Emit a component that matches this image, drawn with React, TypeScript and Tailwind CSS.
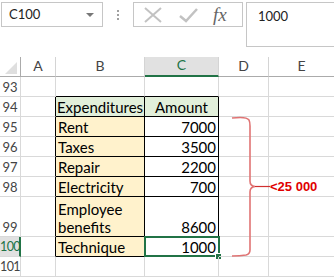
import type { ReactNode } from 'react'

type CellProps = {
  children?: ReactNode
  className?: string
}

// one grid cell, Excel text is bottom aligned
function Cell({ children, className = '' }: CellProps) {
  return <div className={`relative flex items-end border-b border-r ${className}`}>{children}</div>
}

const rows: { n: string; b?: string; c?: string; tall?: boolean; sel?: boolean }[] = [
  { n: '95', b: 'Rent', c: '7000' },
  { n: '96', b: 'Taxes', c: '3500' },
  { n: '97', b: 'Repair', c: '2200' },
  { n: '98', b: 'Electricity', c: '700' },
  { n: '99', b: 'Employee benefits', c: '8600', tall: true },
  { n: '100', b: 'Technique', c: '1000', sel: true },
]

export default function App() {
  const grid = 'border-[#d9d9d9]'
  const head = 'border-[#d4d4d4] justify-center text-[14px] text-[#444] pb-[1px]'
  const rowHead = 'justify-center text-[13px] text-[#444] border-[#d9d9d9]'

  return (
    <div className="relative h-[278px] w-[334px] overflow-hidden bg-white font-['Lato',sans-serif] text-black">
      {/* formula bar */}
      <div className="flex h-[57px] items-start pl-[1px] pt-[2px]">
        <div className="flex h-[25px] w-[102px] items-center justify-between border border-[#c6c6c6] pl-[7px] pr-[8px] text-[13px] text-[#222]">
          <span>C100</span>
          <span className="h-0 w-0 border-x-[4px] border-t-[4px] border-x-transparent border-t-[#777]" />
        </div>
        <div className="ml-[14px] mt-[8px] flex flex-col gap-[2px]">
          <span className="h-[2px] w-[2px] bg-[#a0a0a0]" />
          <span className="h-[2px] w-[2px] bg-[#a0a0a0]" />
          <span className="h-[2px] w-[2px] bg-[#a0a0a0]" />
        </div>
        <div className="ml-[14px] flex h-[25px] w-[110px] items-center border border-[#c6c6c6]">
          <svg className="ml-[9px]" width="20" height="16" viewBox="0 0 20 16">
            <path d="M2 1 L18 15 M18 1 L2 15" stroke="#c2c2c2" strokeWidth="2" fill="none" />
          </svg>
          <svg className="ml-[16px]" width="19" height="16" viewBox="0 0 19 16">
            <path d="M1 9 L7 14 L18 2" stroke="#c2c2c2" strokeWidth="2.5" fill="none" />
          </svg>
          <span className="ml-[15px] font-['Liberation_Serif',serif] text-[19px] italic leading-none text-[#666]">
            fx
          </span>
        </div>
        <div className="ml-[3px] flex h-[45px] flex-1 items-start border border-r-0 border-[#c6c6c6] pl-[11px] pt-[4px] text-[13px] text-[#222]">
          1000
        </div>
      </div>

      {/* sheet */}
      <div className="grid grid-cols-[21px_35px_89px_74px_50px_1fr] grid-rows-[20px_20px_20px_20px_20px_20px_20px_40px_20px_20px_20px] text-[15px] leading-[18px]">
        {/* column headers */}
        <Cell className="border-[#ababab]">
          <span className="absolute bottom-[2px] right-[3px] h-0 w-0 border-b-[12px] border-l-[12px] border-b-[#dfdfdf] border-l-transparent" />
        </Cell>
        <Cell className={`${head} border-b-[#ababab]`}>A</Cell>
        <Cell className={`${head} border-b-[#ababab]`}>B</Cell>
        <Cell className={`${head} bg-[#e1e1e1] border-b-2 border-b-[#217346] text-[#217346]`}>C</Cell>
        <Cell className={`${head} border-b-[#ababab]`}>D</Cell>
        <Cell className={`${head} border-b-[#ababab] border-r-0`}>E</Cell>

        {/* 93 */}
        <Cell className={rowHead}>93</Cell>
        <Cell className={grid} />
        <Cell className={`${grid} border-b-black`} />
        <Cell className={`${grid} border-b-black`} />
        <Cell className={grid} />
        <Cell className={`${grid} border-r-0`} />

        {/* 94 */}
        <Cell className={rowHead}>94</Cell>
        <Cell className={`${grid} border-r-black`} />
        <Cell className="justify-center border-black bg-[#e2efda]">Expenditures</Cell>
        <Cell className="justify-center border-black bg-[#e2efda]">Amount</Cell>
        <Cell className={grid} />
        <Cell className={`${grid} border-r-0`} />

        {rows.map((r) => (
          <div key={r.n} className="contents">
            <Cell
              className={
                r.sel
                  ? 'justify-start border-r-2 border-[#d9d9d9] border-r-[#217346] bg-[#e1e1e1] text-[12.5px] tracking-[-0.6px] text-[#217346]'
                  : rowHead
              }
            >
              {r.n}
            </Cell>
            <Cell className={`${grid} border-r-black`} />
            <Cell className="border-black bg-[#fff2cc] pl-[2px]">{r.b}</Cell>
            <Cell className="justify-end border-black pr-[2px]">
              {r.c}
              {r.sel && (
                <>
                  <span className="pointer-events-none absolute -left-[1px] -top-[1px] bottom-[-1px] right-[-2px] border-2 border-[#217346]" />
                  <span className="absolute bottom-[-4px] right-[-4px] h-[7px] w-[7px] border border-white bg-[#217346]" />
                </>
              )}
            </Cell>
            <Cell className={grid} />
            <Cell className={`${grid} border-r-0`} />
          </div>
        ))}

        {/* 101 */}
        <Cell className="justify-start border-[#d9d9d9] text-[12.5px] tracking-[-0.6px] text-[#444]">101</Cell>
        <Cell className={grid} />
        <Cell className={grid} />
        <Cell className={grid} />
        <Cell className={grid} />
        <Cell className={`${grid} border-r-0`} />
      </div>

      {/* brace drawn over the sheet */}
      <svg className="pointer-events-none absolute left-0 top-0" width="334" height="278" viewBox="0 0 334 278">
        <path
          d="M232 118 C240 117 247 117 249 120 Q250 122 250 126 L250 181 Q250 186 255 186.5 Q250 187 250 192 L250 250 Q250 254 246 255 C240 256 236 256 232 256"
          stroke="#e07474"
          strokeWidth="1.6"
          fill="none"
        />
        <path d="M255 186.5 L270 186.5" stroke="#d03030" strokeWidth="1.2" />
      </svg>
      <span className="absolute left-[270px] top-[179px] font-['Liberation_Sans',sans-serif] text-[13px] font-bold leading-[15px] text-[#e00000]">
        &lt;25 000
      </span>
    </div>
  )
}
